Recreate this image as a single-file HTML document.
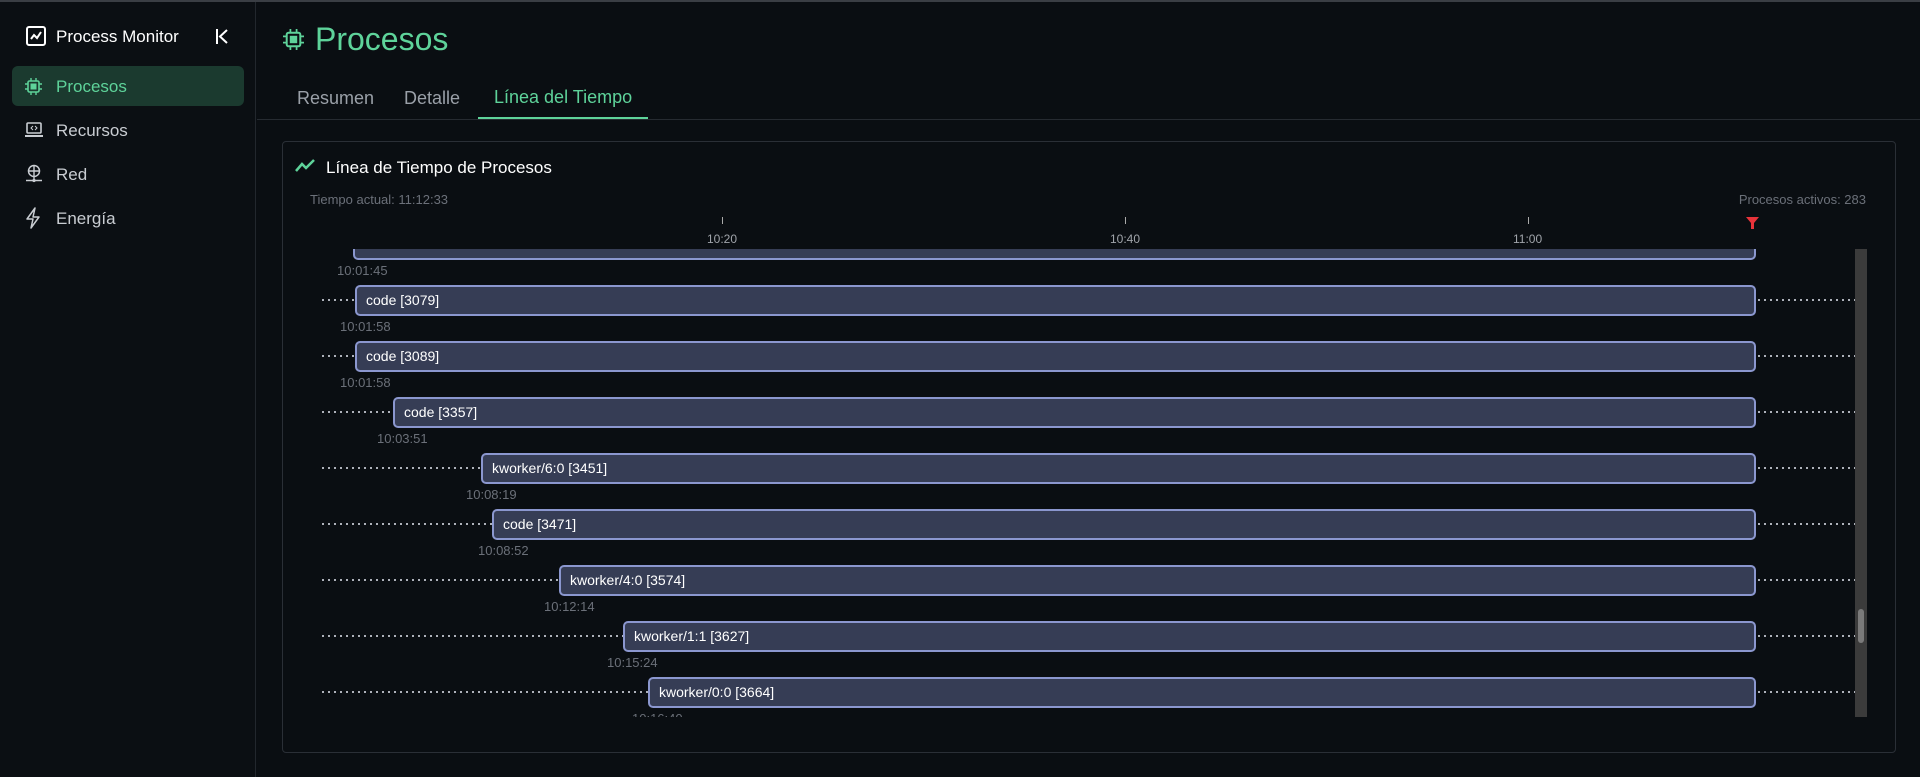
<!DOCTYPE html>
<html><head><meta charset="utf-8"><style>
*{margin:0;padding:0;box-sizing:border-box}
body{width:1920px;height:777px;background:#0a0e12;font-family:"Liberation Sans",sans-serif;color:#e6e6e6;position:relative;overflow:hidden}
.abs{position:absolute}
.topline{left:0;top:0;width:1920px;height:2px;background:#3a3e44}
.side{left:0;top:2px;width:256px;height:775px;border-right:1px solid #22272d;background:#0b0f13}
.nav{position:absolute;left:56px;font-size:17px;color:#c9cdd2;line-height:20px}
.bar{position:absolute;height:31px;background:#363d55;border:2px solid #8b97cf;border-radius:5px;color:#fff;font-size:14px;line-height:27px;padding-left:9px;white-space:nowrap}
.ts{position:absolute;font-size:13px;color:#6b7079}
.dot{position:absolute;height:2px;margin-top:-1px;background:repeating-linear-gradient(90deg,#aeb2ba 0 2px,transparent 2px 6px)}
</style></head><body>
<div class="abs topline"></div>
<div class="abs side"></div>
<svg class="abs" style="left:26px;top:26px" width="20" height="20" viewBox="0 0 20 20"><rect x="1" y="1" width="18" height="18" rx="2" fill="none" stroke="#fff" stroke-width="2"/><path d="M5 13l3-4 3 3 4-6" fill="none" stroke="#fff" stroke-width="2"/></svg>
<div class="abs" style="left:56px;top:27px;font-size:17px;color:#fff">Process Monitor</div>
<svg class="abs" style="left:215px;top:28px" width="14" height="17" viewBox="0 0 14 17"><path d="M2 1v15M12 2L5 8.5l7 6.5" fill="none" stroke="#fff" stroke-width="2"/></svg>
<div class="abs" style="left:12px;top:66px;width:232px;height:40px;background:#1b3a2f;border-radius:6px"></div>
<svg class="abs" style="left:25px;top:78px" width="17" height="17" viewBox="0 0 17 17"><rect x="3" y="3" width="11" height="11" rx="1.5" fill="none" stroke="#5ed39a" stroke-width="1.6"/><rect x="5.5" y="5.5" width="6" height="6" fill="#5ed39a"/><path d="M6 0v3M11 0v3M6 14v3M11 14v3M0 6h3M0 11h3M14 6h3M14 11h3" stroke="#5ed39a" stroke-width="1.4"/></svg>
<div class="nav" style="top:77px;color:#5ed39a">Procesos</div>
<svg class="abs" style="left:24px;top:121px" width="20" height="18" viewBox="0 0 20 18"><rect x="3" y="2" width="14" height="10" rx="1" fill="none" stroke="#c9cdd2" stroke-width="1.6"/><path d="M1 15h18" stroke="#c9cdd2" stroke-width="2"/><path d="M9 5l-2 2 2 2M11 5l2 2-2 2" fill="none" stroke="#c9cdd2" stroke-width="1"/></svg>
<div class="nav" style="top:121px">Recursos</div>
<svg class="abs" style="left:25px;top:164px" width="18" height="20" viewBox="0 0 18 20"><circle cx="9" cy="7" r="5.5" fill="none" stroke="#c9cdd2" stroke-width="1.5"/><path d="M3.5 7h11M9 1.5v11M9 12.5v4M1 16.5h16" stroke="#c9cdd2" stroke-width="1.4"/><circle cx="9" cy="16.5" r="1.6" fill="#c9cdd2"/></svg>
<div class="nav" style="top:165px">Red</div>
<svg class="abs" style="left:25px;top:207px" width="16" height="22" viewBox="0 0 16 22"><path d="M10 1L2 12h6l-2 9 8-11H8l2-9z" fill="none" stroke="#c9cdd2" stroke-width="1.5" stroke-linejoin="round"/></svg>
<div class="nav" style="top:209px">Energía</div>
<svg class="abs" style="left:283px;top:29px" width="21" height="21" viewBox="0 0 17 17"><rect x="3" y="3" width="11" height="11" rx="1.5" fill="none" stroke="#5ed39a" stroke-width="1.6"/><rect x="5.5" y="5.5" width="6" height="6" fill="#5ed39a"/><path d="M6 0v3M11 0v3M6 14v3M11 14v3M0 6h3M0 11h3M14 6h3M14 11h3" stroke="#5ed39a" stroke-width="1.4"/></svg>
<div class="abs" style="left:315px;top:21px;font-size:32px;color:#5ed39a">Procesos</div>
<div class="abs" style="left:297px;top:88px;font-size:18px;color:#9aa0a8">Resumen</div>
<div class="abs" style="left:404px;top:88px;font-size:18px;color:#9aa0a8">Detalle</div>
<div class="abs" style="left:494px;top:87px;font-size:18px;color:#5ed39a">Línea del Tiempo</div>
<div class="abs" style="left:257px;top:119px;width:1663px;height:1px;background:#262b31"></div>
<div class="abs" style="left:478px;top:117px;width:170px;height:2px;background:#5ed39a"></div>
<div class="abs" style="left:282px;top:141px;width:1614px;height:612px;border:1px solid #2a2f36;border-radius:4px"></div>
<svg class="abs" style="left:294px;top:158px" width="22" height="16" viewBox="0 0 22 16"><path d="M2 13l6-7 4 4 8-8" fill="none" stroke="#5ed39a" stroke-width="2.5"/></svg>
<div class="abs" style="left:326px;top:158px;font-size:17px;color:#fff">Línea de Tiempo de Procesos</div>
<div class="abs" style="left:310px;top:192px;font-size:13px;color:#6b7079">Tiempo actual: 11:12:33</div>
<div class="abs" style="right:54px;top:192px;font-size:13px;color:#6b7079">Procesos activos: 283</div>
<div class="abs" style="left:722px;top:217px;width:1px;height:7px;background:#aaa"></div>
<div class="ts" style="left:707px;top:232px;font-size:12px;color:#a0a4aa">10:20</div>
<div class="abs" style="left:1125px;top:217px;width:1px;height:7px;background:#aaa"></div>
<div class="ts" style="left:1110px;top:232px;font-size:12px;color:#a0a4aa">10:40</div>
<div class="abs" style="left:1528px;top:217px;width:1px;height:7px;background:#aaa"></div>
<div class="ts" style="left:1513px;top:232px;font-size:12px;color:#a0a4aa">11:00</div>
<svg class="abs" style="left:1746px;top:217px" width="13" height="13" viewBox="0 0 13 13"><path d="M0 0h13L8 6v6H5V6z" fill="#e8333a"/></svg>
<div class="abs" style="left:283px;top:249px;width:1612px;height:468px;overflow:hidden">
 <div style="position:relative;left:-283px;top:-249px;width:1920px;height:800px">
  <div class="bar" style="left:353px;top:229px;width:1403px"></div>
  <div class="ts" style="left:337px;top:263px">10:01:45</div>

  <div class="dot" style="left:322px;top:300px;width:33px"></div><div class="dot" style="left:1758px;top:300px;width:97px"></div>
  <div class="bar" style="left:355px;top:285px;width:1401px">code [3079]</div>
  <div class="ts" style="left:340px;top:319px">10:01:58</div>

  <div class="dot" style="left:322px;top:356px;width:33px"></div><div class="dot" style="left:1758px;top:356px;width:97px"></div>
  <div class="bar" style="left:355px;top:341px;width:1401px">code [3089]</div>
  <div class="ts" style="left:340px;top:375px">10:01:58</div>

  <div class="dot" style="left:322px;top:412px;width:71px"></div><div class="dot" style="left:1758px;top:412px;width:97px"></div>
  <div class="bar" style="left:393px;top:397px;width:1363px">code [3357]</div>
  <div class="ts" style="left:377px;top:431px">10:03:51</div>

  <div class="dot" style="left:322px;top:468px;width:159px"></div><div class="dot" style="left:1758px;top:468px;width:97px"></div>
  <div class="bar" style="left:481px;top:453px;width:1275px">kworker/6:0 [3451]</div>
  <div class="ts" style="left:466px;top:487px">10:08:19</div>

  <div class="dot" style="left:322px;top:524px;width:170px"></div><div class="dot" style="left:1758px;top:524px;width:97px"></div>
  <div class="bar" style="left:492px;top:509px;width:1264px">code [3471]</div>
  <div class="ts" style="left:478px;top:543px">10:08:52</div>

  <div class="dot" style="left:322px;top:580px;width:237px"></div><div class="dot" style="left:1758px;top:580px;width:97px"></div>
  <div class="bar" style="left:559px;top:565px;width:1197px">kworker/4:0 [3574]</div>
  <div class="ts" style="left:544px;top:599px">10:12:14</div>

  <div class="dot" style="left:322px;top:636px;width:301px"></div><div class="dot" style="left:1758px;top:636px;width:97px"></div>
  <div class="bar" style="left:623px;top:621px;width:1133px">kworker/1:1 [3627]</div>
  <div class="ts" style="left:607px;top:655px">10:15:24</div>

  <div class="dot" style="left:322px;top:692px;width:326px"></div><div class="dot" style="left:1758px;top:692px;width:97px"></div>
  <div class="bar" style="left:648px;top:677px;width:1108px">kworker/0:0 [3664]</div>
  <div class="ts" style="left:632px;top:711px">10:16:40</div>

  <div style="position:absolute;left:1855px;top:249px;width:12px;height:468px;background:#3b3b3b"></div>
  <div style="position:absolute;left:1858px;top:609px;width:6px;height:34px;background:#7a7a7a;border-radius:3px"></div>
 </div>
</div>
</body></html>
